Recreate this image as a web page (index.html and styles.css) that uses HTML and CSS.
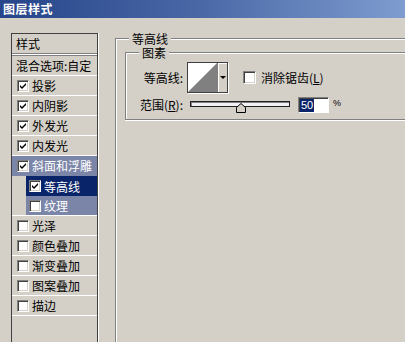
FILE: index.html
```html
<!DOCTYPE html>
<html lang="zh">
<head>
<meta charset="utf-8">
<title>图层样式</title>
<link rel="stylesheet" href="styles.css">
</head>
<body>
<div class="titlebar">图层样式</div>
<div class="main">
  <div class="list">
    <div class="head">样式</div>
    <div class="dline"></div>
    <div class="row blend">混合选项:自定</div>
    <div class="row"><span class="cb"><svg width="8" height="8" viewBox="0 0 8 8"><polygon points="1,3 3,5 7,1 7,3 3,7 1,5" fill="#000"/></svg></span>投影</div>
    <div class="row"><span class="cb"><svg width="8" height="8" viewBox="0 0 8 8"><polygon points="1,3 3,5 7,1 7,3 3,7 1,5" fill="#000"/></svg></span>内阴影</div>
    <div class="row"><span class="cb"><svg width="8" height="8" viewBox="0 0 8 8"><polygon points="1,3 3,5 7,1 7,3 3,7 1,5" fill="#000"/></svg></span>外发光</div>
    <div class="row"><span class="cb"><svg width="8" height="8" viewBox="0 0 8 8"><polygon points="1,3 3,5 7,1 7,3 3,7 1,5" fill="#000"/></svg></span>内发光</div>
    <div class="row hl"><span class="cb"><svg width="8" height="8" viewBox="0 0 8 8"><polygon points="1,3 3,5 7,1 7,3 3,7 1,5" fill="#000"/></svg></span>斜面和浮雕</div>
    <div class="row sub sel"><div class="si"><span class="cb"><svg width="8" height="8" viewBox="0 0 8 8"><polygon points="1,3 3,5 7,1 7,3 3,7 1,5" fill="#000"/></svg></span>等高线</div></div>
    <div class="row sub tex"><div class="si"><span class="cb"></span>纹理</div></div>
    <div class="row"><span class="cb"></span>光泽</div>
    <div class="row"><span class="cb"></span>颜色叠加</div>
    <div class="row"><span class="cb"></span>渐变叠加</div>
    <div class="row"><span class="cb"></span>图案叠加</div>
    <div class="row"><span class="cb"></span>描边</div>
  </div>
  <div class="group outer">
    <div class="legend">等高线</div>
    <div class="group inner">
      <div class="legend">图素</div>
      <div class="form">
        <div class="lbl">等高线:</div>
        <div class="ctl">
          <div class="picker">
            <div class="preview"><svg width="29" height="29" viewBox="0 0 29 29"><rect width="29" height="29" fill="#fff"/><polygon points="0,29 29,0 29,29" fill="#808080"/></svg></div>
            <div class="dd"><span class="arrow"></span></div>
          </div>
          <span class="cb big"></span>
          <span class="cblabel">消除锯齿(<span class="u">L</span>)</span>
        </div>
        <div class="lbl">范围(<span class="u">R</span>):</div>
        <div class="ctl">
          <div class="slider">
            <div class="track"></div>
            <svg class="thumb" width="10" height="10" viewBox="0 0 10 10"><polygon points="0.5,9.5 0.5,4.5 5,0.5 9.5,4.5 9.5,9.5" fill="#d4d0c8" stroke="#000" stroke-width="1"/></svg>
          </div>
          <div class="num"><span>50</span></div>
          <span class="pct">%</span>
        </div>
      </div>
    </div>
  </div>
</div>
</body>
</html>
```
FILE: styles.css
```css
* { box-sizing: border-box; }
html, body { margin: 0; padding: 0; }
body {
  width: 405px;
  height: 342px;
  overflow: hidden;
  background: #d4d0c8;
  font-family: "Noto Sans CJK SC", "Noto Sans", sans-serif;
  font-size: 12px;
  color: #000;
}
.titlebar {
  height: 18px;
  line-height: 18px;
  padding-left: 3px;
  color: #fff;
  font-weight: bold;
  font-size: 12px;
  letter-spacing: 0.5px;
  background: linear-gradient(to right, #26458a 0, #4a68a6 200px, #7e9ccf 405px);
}
.main {
  display: flex;
  align-items: flex-start;
  height: 324px;
  padding: 15px 0 0 11px;
}
.list {
  flex: none;
  width: 87px;
  height: 309px;
  border: 1px solid #404040;
  border-bottom: none;
  box-shadow: 1px 0 0 #fff;
}
.head {
  height: 19px;
  line-height: 19px;
  padding-left: 4px;
}
.dline {
  height: 3px;
  border-top: 1px solid #808080;
  border-bottom: 1px solid #808080;
  background: #fff;
}
.row {
  height: 20px;
  padding: 0 0 1px 5px;
  display: flex;
  align-items: center;
  white-space: nowrap;
  box-shadow: inset 0 -1px 0 #fff;
}
.row.blend { padding-left: 4px; }
.row.hl {
  background: #7b85a8;
  color: #fff;
  box-shadow: none;
}
.row.sub {
  padding-left: 14px;
  align-items: stretch;
}
.si {
  flex: 1;
  display: flex;
  align-items: center;
  padding-left: 3px;
}
.row.sel { box-shadow: none; padding-bottom: 0; }
.sel .si { background: #0a246a; color: #fff; }
.tex .si { background: #7b85a8; color: #fff; }
.cb {
  flex: none;
  width: 12px;
  height: 12px;
  margin-right: 3px;
  background: #fff;
  border: 1px solid;
  border-color: #808080 #fff #fff #808080;
  box-shadow: inset 1px 1px 0 #404040, inset -1px -1px 0 #d4d0c8;
  display: flex;
  align-items: center;
  justify-content: center;
}
.cb svg { display: block; }
.group {
  border: 1px solid #808080;
  border-right: none;
  box-shadow: inset 1px 1px 0 #fff;
}
.outer {
  flex: 1;
  min-width: 0;
  height: 304px;
  margin: 5px 0 0 17px;
  border-bottom: none;
}
.legend {
  display: table;
  margin: -6px 0 0 13px;
  padding: 0 3px;
  line-height: 12px;
  background: #d4d0c8;
}
.inner {
  margin: 7px 0 0 9px;
  padding-bottom: 6px;
  box-shadow: inset 1px 1px 0 #fff, 0 1px 0 #fff;
}
.form {
  display: grid;
  grid-template-columns: 57px auto;
  column-gap: 4px;
  row-gap: 3px;
  margin-top: 3px;
  align-items: center;
}
.lbl { text-align: right; white-space: nowrap; }
.ctl { display: flex; align-items: center; }
.picker {
  width: 41px;
  height: 31px;
  border: 1px solid #404040;
  display: flex;
  box-shadow: 1px 1px 0 #fff;
}
.preview svg { display: block; }
.dd {
  width: 10px;
  border-left: 1px solid #808080;
  background: #d4d0c8;
  box-shadow: inset 1px 1px 0 #fff;
  display: flex;
  align-items: center;
  justify-content: center;
}
.arrow {
  width: 0;
  height: 0;
  border-left: 3px solid transparent;
  border-right: 3px solid transparent;
  border-top: 3px solid #000;
}
.cb.big {
  width: 13px;
  height: 13px;
  margin: 0 5px 0 15px;
}
.cblabel { white-space: nowrap; }
.u { text-decoration: underline; }
.slider {
  position: relative;
  width: 100px;
  height: 16px;
  margin-left: 3px;
}
.track {
  margin-top: 4px;
  height: 6px;
  border: 1px solid #202020;
  background: #f2f2f2;
  box-shadow: inset 1px 1px 0 #808080;
}
.thumb {
  position: absolute;
  left: calc(50% - 4px);
  top: 6px;
  display: block;
}
.num {
  width: 31px;
  height: 16px;
  margin-left: 8px;
  background: #fff;
  border: 1px solid;
  border-color: #808080 #fff #fff #808080;
  box-shadow: inset 1px 1px 0 #404040;
  padding: 1px 0 0 1px;
  font: 11px "Liberation Sans", sans-serif;
}
.num span {
  display: inline-block;
  background: #0a246a;
  color: #fff;
  padding: 0 1px;
  line-height: 13px;
}
.pct {
  align-self: flex-start;
  margin: 1px 0 0 4px;
  font: 9px "Liberation Sans", sans-serif;
}
```
